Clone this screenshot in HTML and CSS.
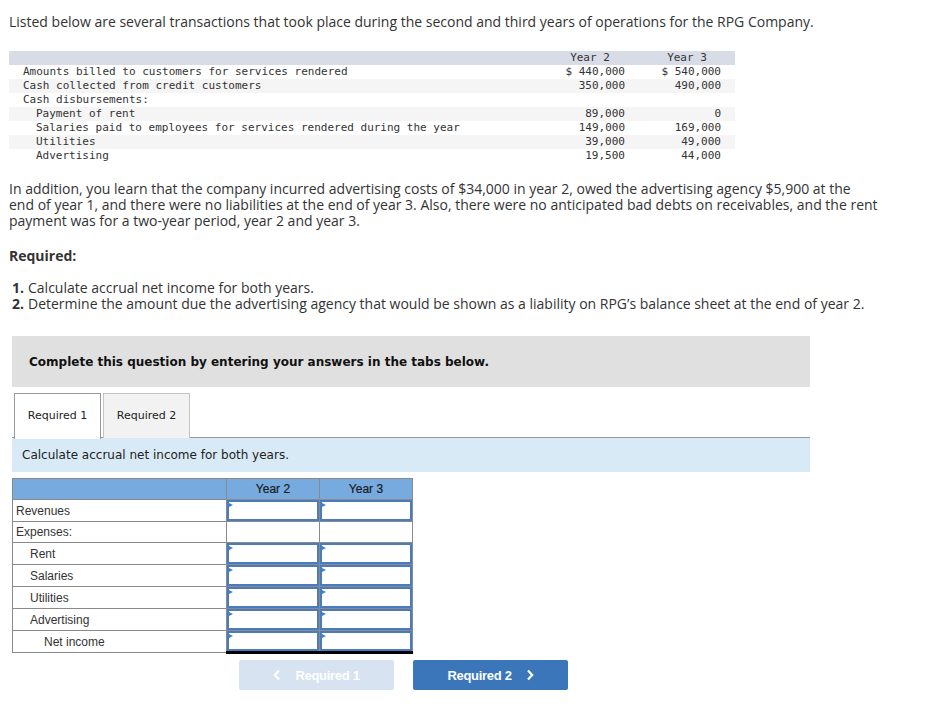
FILE: index.html
```html
<!DOCTYPE html>
<html>
<head>
<meta charset="utf-8">
<link rel="stylesheet" href="styles.css">
</head>
<body>
<div class="page">
  <p class="intro">Listed below are several transactions that took place during the second and third years of operations for the RPG Company.</p>

  <div class="data">
    <div class="drow dhead"><span></span><span class="c">Year 2</span><span class="c">Year 3</span></div>
    <div class="drow"><span>Amounts billed to customers for services rendered</span><span>$ 440,000</span><span>$ 540,000</span></div>
    <div class="drow alt"><span>Cash collected from credit customers</span><span>350,000</span><span>490,000</span></div>
    <div class="drow"><span>Cash disbursements:</span><span></span><span></span></div>
    <div class="drow alt"><span class="ind">Payment of rent</span><span>89,000</span><span>0</span></div>
    <div class="drow"><span class="ind">Salaries paid to employees for services rendered during the year</span><span>149,000</span><span>169,000</span></div>
    <div class="drow alt"><span class="ind">Utilities</span><span>39,000</span><span>49,000</span></div>
    <div class="drow"><span class="ind">Advertising</span><span>19,500</span><span>44,000</span></div>
  </div>

  <p class="body">In addition, you learn that the company incurred advertising costs of $34,000 in year 2, owed the advertising agency $5,900 at the end of year 1, and there were no liabilities at the end of year 3. Also, there were no anticipated bad debts on receivables, and the rent payment was for a two-year period, year 2 and year 3.</p>

  <p class="req">Required:</p>

  <ol class="steps">
    <li><b class="n">1.</b><span>Calculate accrual net income for both years.</span></li>
    <li><b class="n">2.</b><span>Determine the amount due the advertising agency that would be shown as a liability on RPG’s balance sheet at the end of year 2.</span></li>
  </ol>

  <div class="work">
    <div class="banner">Complete this question by entering your answers in the tabs below.</div>

    <div class="tabs">
      <div class="tab active">Required 1</div>
      <div class="tab">Required 2</div>
    </div>

    <div class="instr">Calculate accrual net income for both years.</div>

    <table class="ans">
      <thead>
        <tr><th class="lbl"></th><th>Year 2</th><th>Year 3</th></tr>
      </thead>
      <tbody>
        <tr><td class="lbl">Revenues</td><td class="in"><div class="box"></div></td><td class="in"><div class="box"></div></td></tr>
        <tr><td class="lbl">Expenses:</td><td></td><td></td></tr>
        <tr><td class="lbl i1">Rent</td><td class="in"><div class="box"></div></td><td class="in"><div class="box"></div></td></tr>
        <tr><td class="lbl i1">Salaries</td><td class="in"><div class="box"></div></td><td class="in"><div class="box"></div></td></tr>
        <tr><td class="lbl i1">Utilities</td><td class="in"><div class="box"></div></td><td class="in"><div class="box"></div></td></tr>
        <tr><td class="lbl i1">Advertising</td><td class="in"><div class="box"></div></td><td class="in"><div class="box"></div></td></tr>
        <tr class="total"><td class="lbl i2">Net income</td><td class="in"><div class="box"></div></td><td class="in"><div class="box"></div></td></tr>
      </tbody>
    </table>

    <div class="nav">
      <button class="btn prev" type="button"><svg width="8" height="12" viewBox="0 0 8 12"><path d="M6 1.5 L1.8 6 L6 10.5" fill="none" stroke="#fff" stroke-width="2.2"/></svg><span>Required 1</span></button>
      <button class="btn next" type="button"><span>Required 2</span><svg width="8" height="12" viewBox="0 0 8 12"><path d="M2 1.5 L6.2 6 L2 10.5" fill="none" stroke="#fff" stroke-width="2.2"/></svg></button>
    </div>
  </div>
</div>
</body>
</html>
```

FILE: styles.css
```css
* { box-sizing: border-box; }
html, body { margin: 0; padding: 0; background: #fff; }
body {
  font-family: "Open Sans", "Lato", sans-serif;
  color: #333;
}
.page {
  width: 878px;
  padding: 0 0 0 9px;
}
.intro {
  margin: 0;
  padding-top: 14px;
  font-size: 14px;
  line-height: 16px;
  white-space: nowrap;
}
.data {
  margin-top: 21px;
  width: 726px;
  font-family: "DejaVu Sans Mono", "Liberation Mono", monospace;
  font-size: 11px;
  color: #333;
}
.drow {
  display: grid;
  grid-template-columns: 1fr 70px 68px;
  column-gap: 28px;
  height: 14px;
  line-height: 14px;
  padding: 0 14px;
  white-space: pre;
}
.drow span { text-align: right; }
.drow span:first-child { text-align: left; }
.drow span.c { text-align: center; }
.drow .ind { padding-left: 13px; }
.dhead { background: #d8dce6; }
.alt { background: #f5f5f5; }

.body {
  margin: 18px 0 0;
  font-size: 14px;
  line-height: 16px;
}
.req {
  margin: 19px 0 0;
  font-size: 14px;
  line-height: 16px;
  font-weight: 700;
}
.steps {
  list-style: none;
  margin: 16px 0 0;
  padding: 0;
  font-size: 14px;
  line-height: 16px;
  white-space: nowrap;
}
.steps li {
  display: grid;
  grid-template-columns: 15px 1fr;
  column-gap: 4px;
  height: 16px;
}
.steps .n { text-align: right; }

.work {
  width: 798px;
  margin: 24px 0 0 3px;
}
.banner {
  background: #e0e0e0;
  height: 51px;
  padding: 0 0 0 17px;
  display: flex;
  align-items: center;
  font-family: "DejaVu Sans", Verdana, sans-serif;
  font-weight: 700;
  font-size: 12px;
  color: #111;
}
.tabs {
  display: flex;
  gap: 2px;
  margin-top: 6px;
  padding-left: 2px;
  border-bottom: 1px solid #999;
  height: 45px;
}
.tab {
  width: 87px;
  height: 45px;
  border: 1px solid #c4c4c4;
  border-bottom: none;
  background: #f2f2f2;
  font-family: "DejaVu Sans", Verdana, sans-serif;
  font-size: 11px;
  color: #222;
  display: flex;
  align-items: center;
  justify-content: center;
  padding-bottom: 2px;
}
.tab.active {
  background: #fff;
  border-color: #9a9a9a;
  margin-bottom: -1px;
  height: 46px;
}
.instr {
  background: #d9eaf7;
  height: 34px;
  padding-left: 10px;
  display: flex;
  align-items: center;
  font-family: "DejaVu Sans", Verdana, sans-serif;
  font-size: 12px;
  color: #222;
}

.ans {
  margin-top: 6px;
  border-collapse: collapse;
  font-family: "Liberation Sans", Arial, sans-serif;
  font-size: 12px;
  color: #333;
}
.ans th, .ans td {
  border: 1px solid #8a8a8a;
  padding: 0;
  height: 21px;
}
.ans th {
  background: #77abe0;
  font-weight: normal;
  color: #1a1a1a;
  width: 93px;
  height: 21px;
  text-align: center;
  -webkit-text-stroke: 0.2px #1a1a1a;
}
.ans th.lbl { width: 214px; }
.ans td.lbl { padding-left: 3px; text-align: left; }
.ans td.i1 { padding-left: 17px; }
.ans td.i2 { padding-left: 31px; }
.ans td.in { padding: 0; }
.box {
  height: 21px;
  border: 2px solid #4a7cbd;
  position: relative;
  background: #fff;
}
.box::before {
  content: "";
  position: absolute;
  left: 0;
  top: 1px;
  border-left: 4px solid #3d7fd0;
  border-top: 2.5px solid transparent;
  border-bottom: 2.5px solid transparent;
}
.total td { border-top: 1px solid #8a8a8a; }
.total td.in { border-top: 1px solid #000; border-bottom: 3px solid #000; }
.total .box { height: 20px; }

.nav {
  display: flex;
  gap: 19px;
  margin-top: 6px;
  padding-left: 227px;
}
.btn {
  width: 155px;
  height: 30px;
  border: none;
  border-radius: 2px;
  color: #fff;
  font-family: "Liberation Sans", Arial, sans-serif;
  font-weight: 700;
  font-size: 13px;
  letter-spacing: -0.3px;
  display: flex;
  align-items: center;
  justify-content: center;
  gap: 14px;
  padding: 0;
}
.btn.prev { background: #d7e3f1; }
.btn.next { background: #3a76b9; }
```
